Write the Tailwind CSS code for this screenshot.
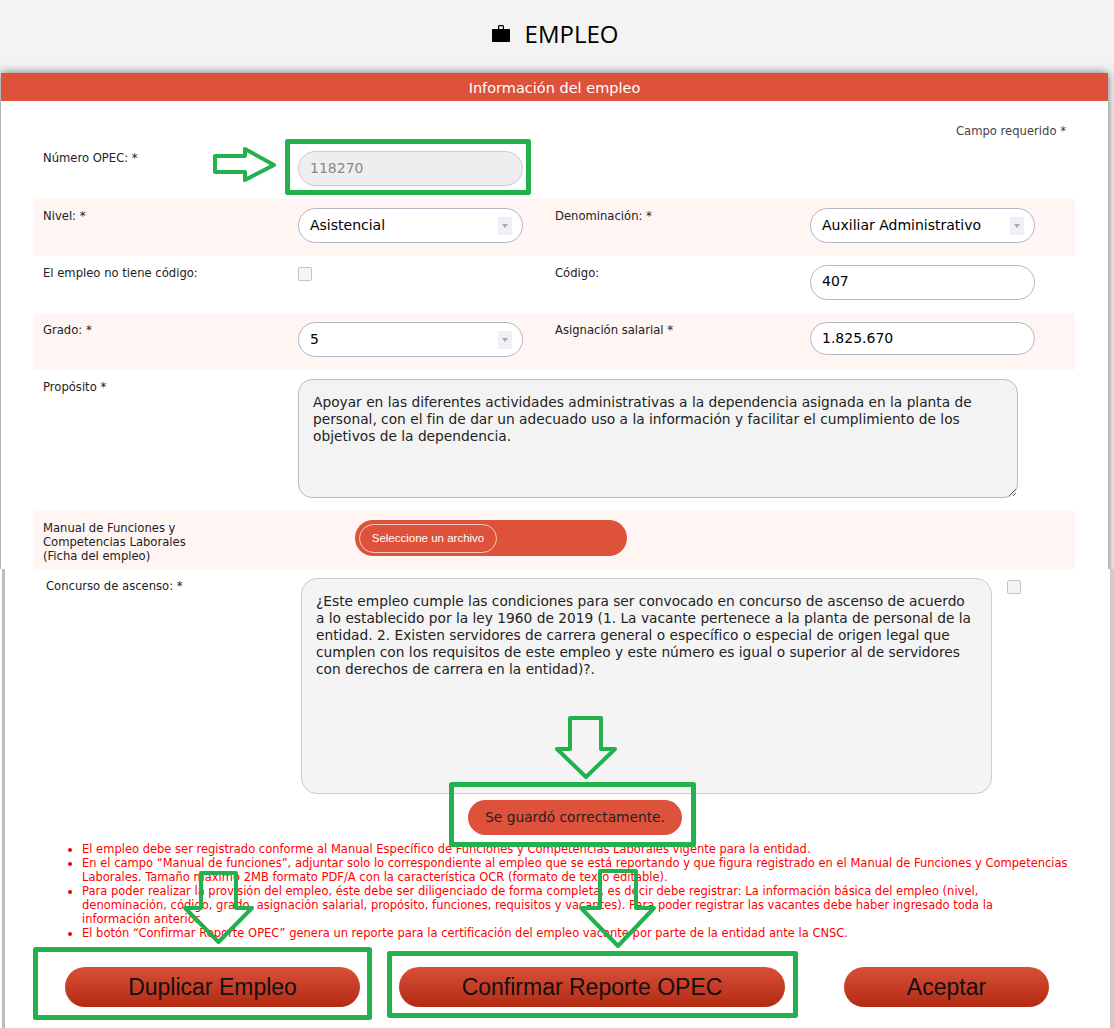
<!DOCTYPE html>
<html lang="es">
<head>
    <meta charset="UTF-8">
    <meta name="viewport" content="width=device-width, initial-scale=1.0">
    <title>Empleo</title>
    <script src="https://cdn.jsdelivr.net/npm/@tailwindcss/browser@4"></script>
</head>
<body class="relative bg-[#f3f3f3] h-[1028px] overflow-hidden font-['DejaVu_Sans',sans-serif] text-[11.6px] text-[#222]">

<!-- title -->
<div class="h-[73px] flex items-center justify-center gap-[15px] pb-[6px] pr-[4px]">
    <svg class="w-[18px] h-[17px]" viewBox="0 0 18 17" fill="#000">
        <path d="M6 4V1.500C6 .7 6.700 0 7.500 0h3C11.300 0 12 .7 12 1.500V4h5c.6 0 1 .4 1 1v11c0 .6-.4 1-1 1H1c-.6 0-1-.4-1-1V5c0-.6.4-1 1-1h5zm1.200 0h3.600V1.200H7.200V4z"/>
    </svg>
    <h1 class="font-['Open_Sans',sans-serif] text-[24px] leading-none text-black">EMPLEO</h1>
</div>

<!-- card -->
<div class="ml-px w-[1107px] shadow-[0_0_9px_rgba(0,0,0,0.55)] bg-white h-[960px]">
    <div class="h-[28px] pt-[3px] bg-[#de513a] text-white text-[14.500px] flex items-center justify-center">Información del empleo</div>

    <div class="px-[33px]">
        <p class="h-[38px] pt-[23px] pr-[9px] text-right leading-[14px] text-[#444]">Campo requerido *</p>

        <div class="grid grid-cols-[255px_1fr] h-[60px] pl-[9px] pt-[12px]">
            <label class="leading-[14px]">Número OPEC: *</label>
            <input disabled value="118270" class="w-[225px] h-[35px] px-[11px] pb-[2px] text-[14px] bg-[#eee] text-[#888] border border-[#ccc] rounded-[18px]">
        </div>

        <div class="grid grid-cols-[255px_257px_255px_1fr] h-[57px] pl-[9px] pt-[9px] bg-[#fff5f3]">
            <label class="pt-px leading-[14px]">Nivel: *</label>
            <div class="relative w-[225px] h-[35px] px-[11px] flex items-center text-[14px] text-black bg-white border border-[#b4b4c4] rounded-[18px]">
                Asistencial
                <span class="absolute right-[10px] top-[8px] w-[14px] h-[18px] bg-[#eef0f3] flex items-center justify-center"><span class="border-x-[3px] border-x-transparent border-t-[4px] border-t-[#a0a8b8]"></span></span>
            </div>
            <label class="pt-px leading-[14px]">Denominación: *</label>
            <div class="relative w-[225px] h-[35px] px-[11px] flex items-center text-[14px] text-black bg-white border border-[#b4b4c4] rounded-[18px]">
                Auxiliar Administrativo
                <span class="absolute right-[10px] top-[8px] w-[14px] h-[18px] bg-[#eef0f3] flex items-center justify-center"><span class="border-x-[3px] border-x-transparent border-t-[4px] border-t-[#a0a8b8]"></span></span>
            </div>
        </div>

        <div class="grid grid-cols-[255px_257px_255px_1fr] h-[57px] pl-[9px] pt-[9px]">
            <label class="pt-px leading-[14px]">El empleo no tiene código:</label>
            <div class="pt-[2px]"><span class="block w-[14px] h-[14px] bg-[#f3f5f9] border border-[#c4c4c4] rounded-[2px]"></span></div>
            <label class="pt-px leading-[14px]">Código:</label>
            <input value="407" class="w-[225px] h-[35px] px-[11px] pb-[4px] text-[14px] text-black bg-white border border-[#b4b4c4] rounded-[18px]">
        </div>

        <div class="grid grid-cols-[255px_257px_255px_1fr] h-[57px] pl-[9px] pt-[9px] bg-[#fff5f3]">
            <label class="pt-px leading-[14px]">Grado: *</label>
            <div class="relative w-[225px] h-[35px] px-[11px] flex items-center text-[14px] text-black bg-white border border-[#b4b4c4] rounded-[18px]">
                5
                <span class="absolute right-[10px] top-[8px] w-[14px] h-[18px] bg-[#eef0f3] flex items-center justify-center"><span class="border-x-[3px] border-x-transparent border-t-[4px] border-t-[#a0a8b8]"></span></span>
            </div>
            <label class="pt-px leading-[14px]">Asignación salarial *</label>
            <input value="1.825.670" class="w-[225px] h-[33px] px-[11px] pb-[2px] text-[14px] text-black bg-white border border-[#b4b4c4] rounded-[18px]">
        </div>

        <div class="grid grid-cols-[255px_1fr] h-[141px] pl-[9px] pt-[9px]">
            <label class="pt-px leading-[14px]">Propósito *</label>
            <textarea class="w-[720px] h-[119px] pt-[14px] px-[14px] text-[13.750px] leading-[17px] text-[#222] bg-[#f3f3f3] border border-[#bbb] rounded-[14px]">Apoyar en las diferentes actividades administrativas a la dependencia asignada en la planta de personal, con el fin de dar un adecuado uso a la información y facilitar el cumplimiento de los objetivos de la dependencia.</textarea>
        </div>

        <div class="grid grid-cols-[312px_1fr] h-[58px] pl-[9px] pt-[9px] bg-[#fff5f3]">
            <label class="leading-[14px] pt-[1px]">Manual de Funciones y<br>Competencias Laborales<br>(Ficha del empleo)</label>
            <div class="w-[272px] h-[36px] p-[4px] bg-[#de513a] rounded-[18px]">
                <span class="flex items-center justify-center w-[138px] h-[29px] pt-px font-['Liberation_Sans',sans-serif] text-[11.500px] text-white border border-[#f7c9c0] rounded-[15px]">Seleccione un archivo</span>
            </div>
        </div>
    </div>
</div>

<!-- lower part -->
<div class="absolute left-0 top-[569px] w-[1114px] h-[459px] pl-[2px] bg-white border-r-[4px] border-[#ccc]">
    <div class="relative h-full border-l-[3px] border-[#bdbdbd]">
        <div class="grid grid-cols-[255px_691px_auto] pl-[41px] pt-[9px] h-[225px]">
            <label class="pt-px leading-[14px]">Concurso de ascenso: *</label>
            <div class="h-[216px] pt-[14px] px-[14px] text-[13.750px] leading-[17px] bg-[#f4f4f4] border border-[#ccc] rounded-[16px]">¿Este empleo cumple las condiciones para ser convocado en concurso de ascenso de acuerdo a lo establecido por la ley 1960 de 2019 (1. La vacante pertenece a la planta de personal de la entidad. 2. Existen servidores de carrera general o específico o especial de origen legal que cumplen con los requisitos de este empleo y este número es igual o superior al de servidores con derechos de carrera en la entidad)?.</div>
            <span class="block w-[14px] h-[14px] ml-[15px] mt-[2px] bg-[#f3f5f9] border border-[#c4c4c4] rounded-[2px]"></span>
        </div>

        <div class="mt-[6px] pl-[463px] h-[35px]">
            <span class="w-[214px] h-[35px] flex items-center justify-center text-[13.750px] text-[#222] bg-[#de513a] rounded-[18px]">Se guardó correctamente.</span>
        </div>

        <ul class="mt-[7px] ml-[77px] w-[1000px] list-disc text-[11.500px] leading-[14px] text-[#f00] marker:text-[#e00]">
            <li>El empleo debe ser registrado conforme al Manual Específico de Funciones y Competencias Laborales vigente para la entidad.</li>
            <li>En el campo “Manual de funciones”, adjuntar solo lo correspondiente al empleo que se está reportando y que figura registrado en el Manual de Funciones y Competencias Laborales. Tamaño máximo 2MB formato PDF/A con la característica OCR (formato de texto editable).</li>
            <li>Para poder realizar la provisión del empleo, éste debe ser diligenciado de forma completa, es decir debe registrar: La información básica del empleo (nivel,<br>denominación, código, grado, asignación salarial, propósito, funciones, requisitos y vacantes). Para poder registrar las vacantes debe haber ingresado toda la<br>información anterior.</li>
            <li>El botón “Confirmar Reporte OPEC” genera un reporte para la certificación del empleo vacante por parte de la entidad ante la CNSC.</li>
        </ul>

        <div class="absolute top-[398px] left-[60px] flex font-['Liberation_Sans',sans-serif] text-[23px] text-[#111]">
            <button class="w-[295px] h-[40px] rounded-[20px] bg-gradient-to-b from-[#d94f38] to-[#b32a12]">Duplicar Empleo</button>
            <button class="ml-[39px] w-[386px] h-[40px] rounded-[20px] bg-gradient-to-b from-[#d94f38] to-[#b32a12]">Confirmar Reporte OPEC</button>
            <button class="ml-[59px] w-[205px] h-[40px] rounded-[20px] bg-gradient-to-b from-[#d94f38] to-[#b32a12]">Aceptar</button>
        </div>
    </div>
</div>

<!-- green annotations drawn over the page -->
<svg class="absolute inset-0 w-[1114px] h-[1028px] pointer-events-none" viewBox="0 0 1114 1028" fill="none" stroke="#22b14c" stroke-width="5" stroke-linejoin="round">
    <rect x="287.500" y="141.500" width="241" height="51"/>
    <rect x="451.500" y="784.500" width="242" height="60"/>
    <rect x="35.500" y="949.500" width="334" height="68"/>
    <rect x="389.500" y="953.500" width="406" height="62"/>
    <path d="M215 156H245V149L274 165L245 180V172H215Z" stroke-width="4"/>
    <path d="M570 718H601V749H615L586 777L557 749H570Z" stroke-width="4"/>
    <path d="M201 873H236V908H252L218.500 942L185 908H201Z" stroke-width="4"/>
    <path d="M600 871H636V908H654L618 946L581 908H600Z" stroke-width="4"/>
</svg>
</body>
</html>
